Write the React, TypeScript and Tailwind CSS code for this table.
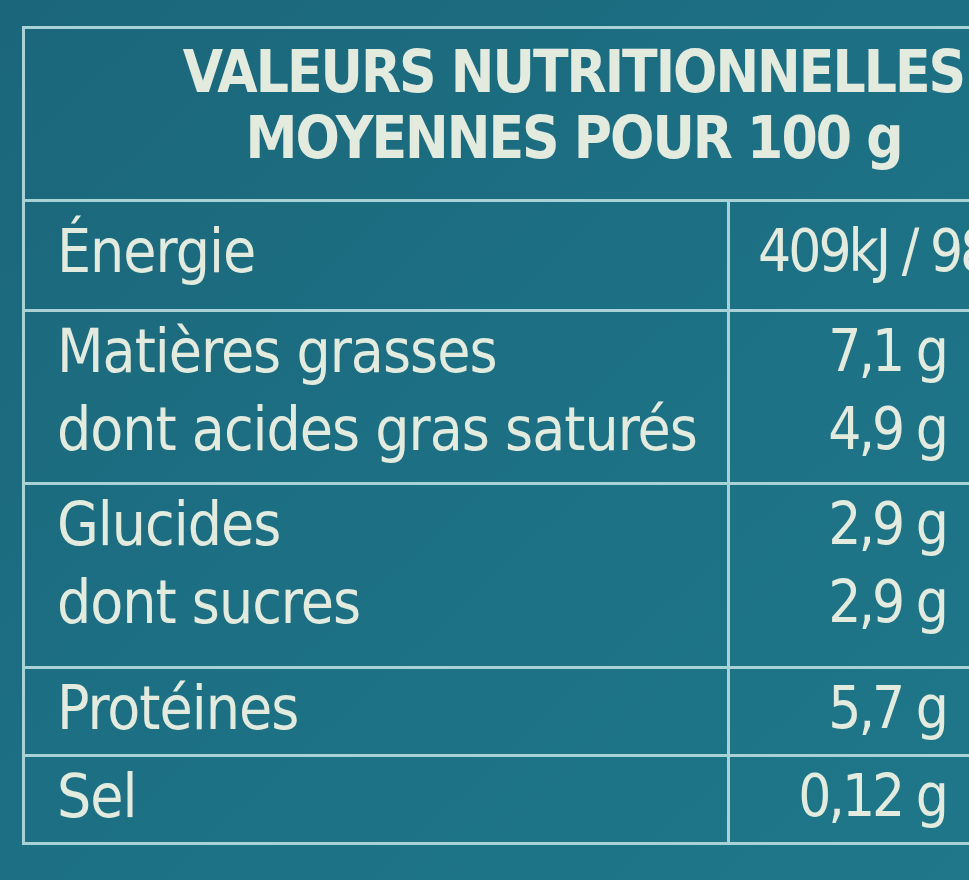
import React from "react";

const font = {
  fontFamily: '"Liberation Sans Narrow", "DejaVu Sans Condensed", "DejaVu Sans", sans-serif',
};

interface Item {
  label: string;
  value: string;
}

const groups: { items: Item[]; h: string; pt: string }[] = [
  { items: [{ label: "Énergie", value: "409kJ / 98 kcal" }], h: "h-[110px]", pt: "pt-[10px]" },
  {
    items: [
      { label: "Matières grasses", value: "7,1 g" },
      { label: "dont acides gras saturés", value: "4,9 g" },
    ],
    h: "h-[173px]",
    pt: "pt-0",
  },
  {
    items: [
      { label: "Glucides", value: "2,9 g" },
      { label: "dont sucres", value: "2,9 g" },
    ],
    h: "h-[184px]",
    pt: "pt-0",
  },
  { items: [{ label: "Protéines", value: "5,7 g" }], h: "h-[88px]", pt: "pt-0" },
  { items: [{ label: "Sel", value: "0,12 g" }], h: "h-[88px]", pt: "pt-0" },
];

export default function App() {
  return (
    <div
      className="w-[969px] h-[880px] overflow-hidden bg-gradient-to-br from-[#1b667a] via-[#1d7084] to-[#1f7789] pl-[22px] pt-[26px] text-[#e3ebdf]"
      style={font}
    >
      <div className="w-[1100px] border-l-[3px] border-t-[3px] border-[#a8d2d6]">
        <div className="h-[170px] pt-[10px] text-center font-bold text-[58px] leading-[66px] tracking-[-2px] whitespace-nowrap">
          <div>VALEURS NUTRITIONNELLES</div>
          <div>MOYENNES POUR 100 g</div>
        </div>
        {groups.map((g, i) => (
          <div key={i} className={`flex border-t-[3px] border-[#a8d2d6] ${g.h}`}>
            <div className={`w-[705px] shrink-0 border-r-[3px] border-[#a8d2d6] pl-[32px] ${g.pt}`}>
              {g.items.map((it) => (
                <div key={it.label} className="text-[60px] leading-[78px] tracking-[-1px] whitespace-nowrap">
                  {it.label}
                </div>
              ))}
            </div>
            <div className={`w-[240px] shrink-0 pr-[24px] text-right ${g.pt}`}>
              {g.items.map((it) => (
                <div
                  key={it.label}
                  className={`text-[58px] leading-[78px] tracking-[-3px] whitespace-nowrap ${
                    it.value.includes("kJ") ? "text-left pl-[28px]" : ""
                  }`}
                >
                  {it.value}
                </div>
              ))}
            </div>
          </div>
        ))}
        <div className="border-t-[3px] border-[#a8d2d6]" />
      </div>
    </div>
  );
}
